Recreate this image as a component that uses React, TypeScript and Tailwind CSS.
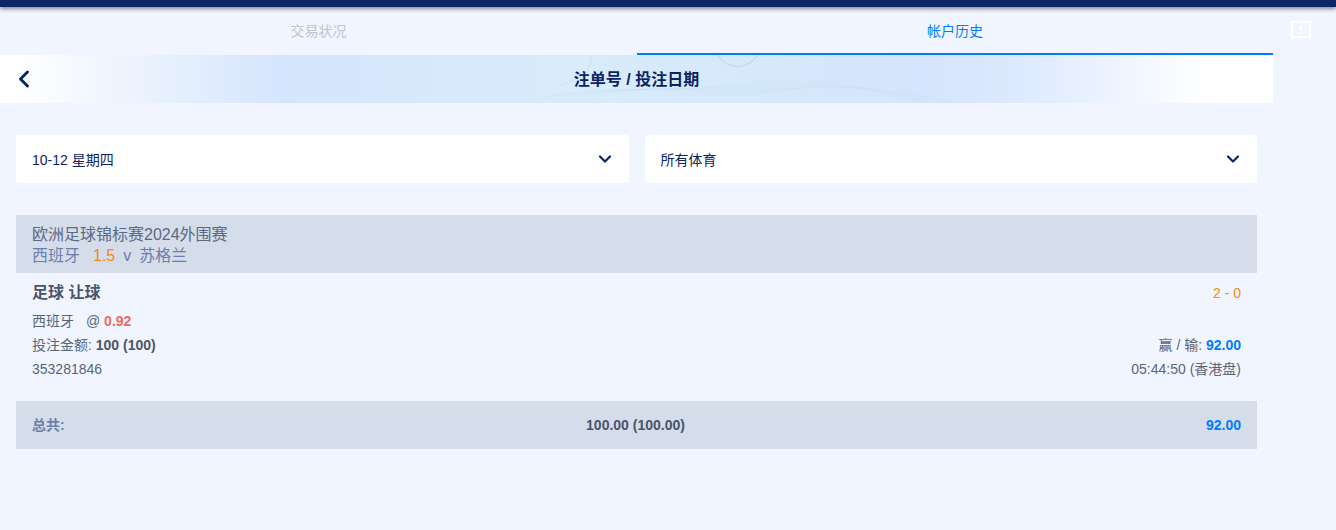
import { ChevronDown, ChevronLeft } from 'lucide-react';

const FONT = "font-['Liberation_Sans','Noto_Sans_CJK_SC',sans-serif]";

function BannerWaves() {
  // faint guilloche lines behind the banner title
  const lines = Array.from({ length: 12 }, (_, i) => i);
  return (
    <svg className="absolute inset-0 h-full w-full" viewBox="0 0 1273 48" preserveAspectRatio="none" fill="none">
      {lines.map(i => (
        <path
          key={i}
          d={`M${510 + i * 7} 48C${560 + i * 6} ${38 - i} ${620 + i * 4} ${28 + i} ${690 + i * 5} ${40 - i}S${800 + i * 6} ${10 + i * 2} ${960 - i * 4} 48`}
          stroke="#c8e4f3"
          strokeWidth="0.4"
          opacity="0.55"
        />
      ))}
      <path d="M590 0C594 16 580 24 560 30" stroke="#c9e0ee" strokeWidth="1.500" opacity="0.6" />
      <path d="M718 0C724 12 745 18 758 0" stroke="#c3d8e8" strokeWidth="1.500" opacity="0.8" />
    </svg>
  );
}

function Select({ label }: { label: string }) {
  return (
    <div className="flex h-12 flex-1 items-center justify-between rounded-[3px] bg-white pl-4 pr-[14px] text-sm text-[#0a2463]">
      <span className="pt-[2px]">{label}</span>
      <ChevronDown size={20} strokeWidth={2.6} className="-mt-[1px]" />
    </div>
  );
}

export default function App() {
  return (
    <div className={`${FONT} h-[530px] w-[1336px] overflow-hidden bg-[#f0f5ff]`}>
      <div className="relative h-[7px] bg-[#0c2668] shadow-[0_2px_4px_rgba(0,0,0,0.45)]" />

      <div className="flex">
        <div className="w-[1273px]">
          {/* Tabs */}
          <div className="flex h-12 text-sm">
            <div className="flex w-[637px] items-center justify-center text-[#c0c4d0]">交易状况</div>
            <div className="flex flex-1 items-center justify-center border-b-2 border-[#007bff] pt-[2px] text-[#007bff]">帐户历史</div>
          </div>

          {/* Banner */}
          <div className="relative flex h-12 items-center justify-center bg-[linear-gradient(90deg,#ffffff_0%,#ffffff_1%,#d5e5fd_22%,#d8ecfb_45%,#d5e5fd_72%,#dce9ff_80%,#ffffff_95%,#ffffff_100%)]">
            <BannerWaves />
            <ChevronLeft size={28} strokeWidth={2.5} className="absolute left-[10px] top-[10px] text-[#0a2463]" />
            <span className="relative pt-[2px] text-base font-bold text-[#0a2463]">注单号 / 投注日期</span>
          </div>
        </div>

        <div className="flex-1 pt-[13px] pl-[17px]">
          <svg width="22" height="22" viewBox="0 0 22 22" fill="#ffffff">
            <path fillRule="evenodd" d="M1 2a1 1 0 0 1 1-1h18a1 1 0 0 1 1 1v15a1 1 0 0 1-1 1H4.500L1 21zM3 3v13.800L3.800 16H19V3zM10 5h2v5.500h-2zM10 12.500h2v2h-2z" />
          </svg>
        </div>
      </div>

      <div className="w-[1273px] px-4">
        {/* Filters */}
        <div className="mt-8 flex gap-4">
          <Select label="10-12 星期四" />
          <Select label="所有体育" />
        </div>

        {/* League header */}
        <div className="mt-8 h-[58px] bg-[#d5dcea] px-4 pt-[9px] text-base leading-[21px]">
          <div className="text-[#5a6a85]">欧洲足球锦标赛2024外围赛</div>
          <div className="text-[#6b7fa8]">
            西班牙<span className="ml-[13px] text-[#f58a0b]">1.5</span>
            <span className="ml-2">v</span>
            <span className="ml-2">苏格兰</span>
          </div>
        </div>

        {/* Bet row */}
        <div className="flex justify-between px-4 pt-[9px] text-[#5a6578]">
          <div>
            <div className="h-[21px] text-base font-bold leading-[21px] text-[#48556a]">足球 让球</div>
            <div className="mt-[10px] text-sm leading-[16px]">
              西班牙<span className="ml-3">@</span> <span className="font-bold text-[#ee6a60]">0.92</span>
            </div>
            <div className="mt-[8px] text-sm leading-[16px]">
              投注金额: <span className="font-bold text-[#48556a]">100 (100)</span>
            </div>
            <div className="mt-[8px] text-sm leading-[16px]">353281846</div>
          </div>
          <div className="text-right text-sm leading-[16px]">
            <div className="mt-[3px] h-[52px] text-[#f58a0b]">2 - 0</div>
            <div>
              赢 / 输: <span className="font-bold text-[#007bff]">92.00</span>
            </div>
            <div className="mt-[8px]">05:44:50 (香港盘)</div>
          </div>
        </div>

        {/* Total */}
        <div className="mt-[24px] flex h-12 items-center bg-[#d5dcea] px-4 text-sm font-bold">
          <div className="flex-1 text-[#6b7fa8]">总共:</div>
          <div className="flex-1 pr-[2px] text-center text-[#48556a]">100.00 (100.00)</div>
          <div className="flex-1 text-right text-[#007bff]">92.00</div>
        </div>
      </div>
    </div>
  );
}
